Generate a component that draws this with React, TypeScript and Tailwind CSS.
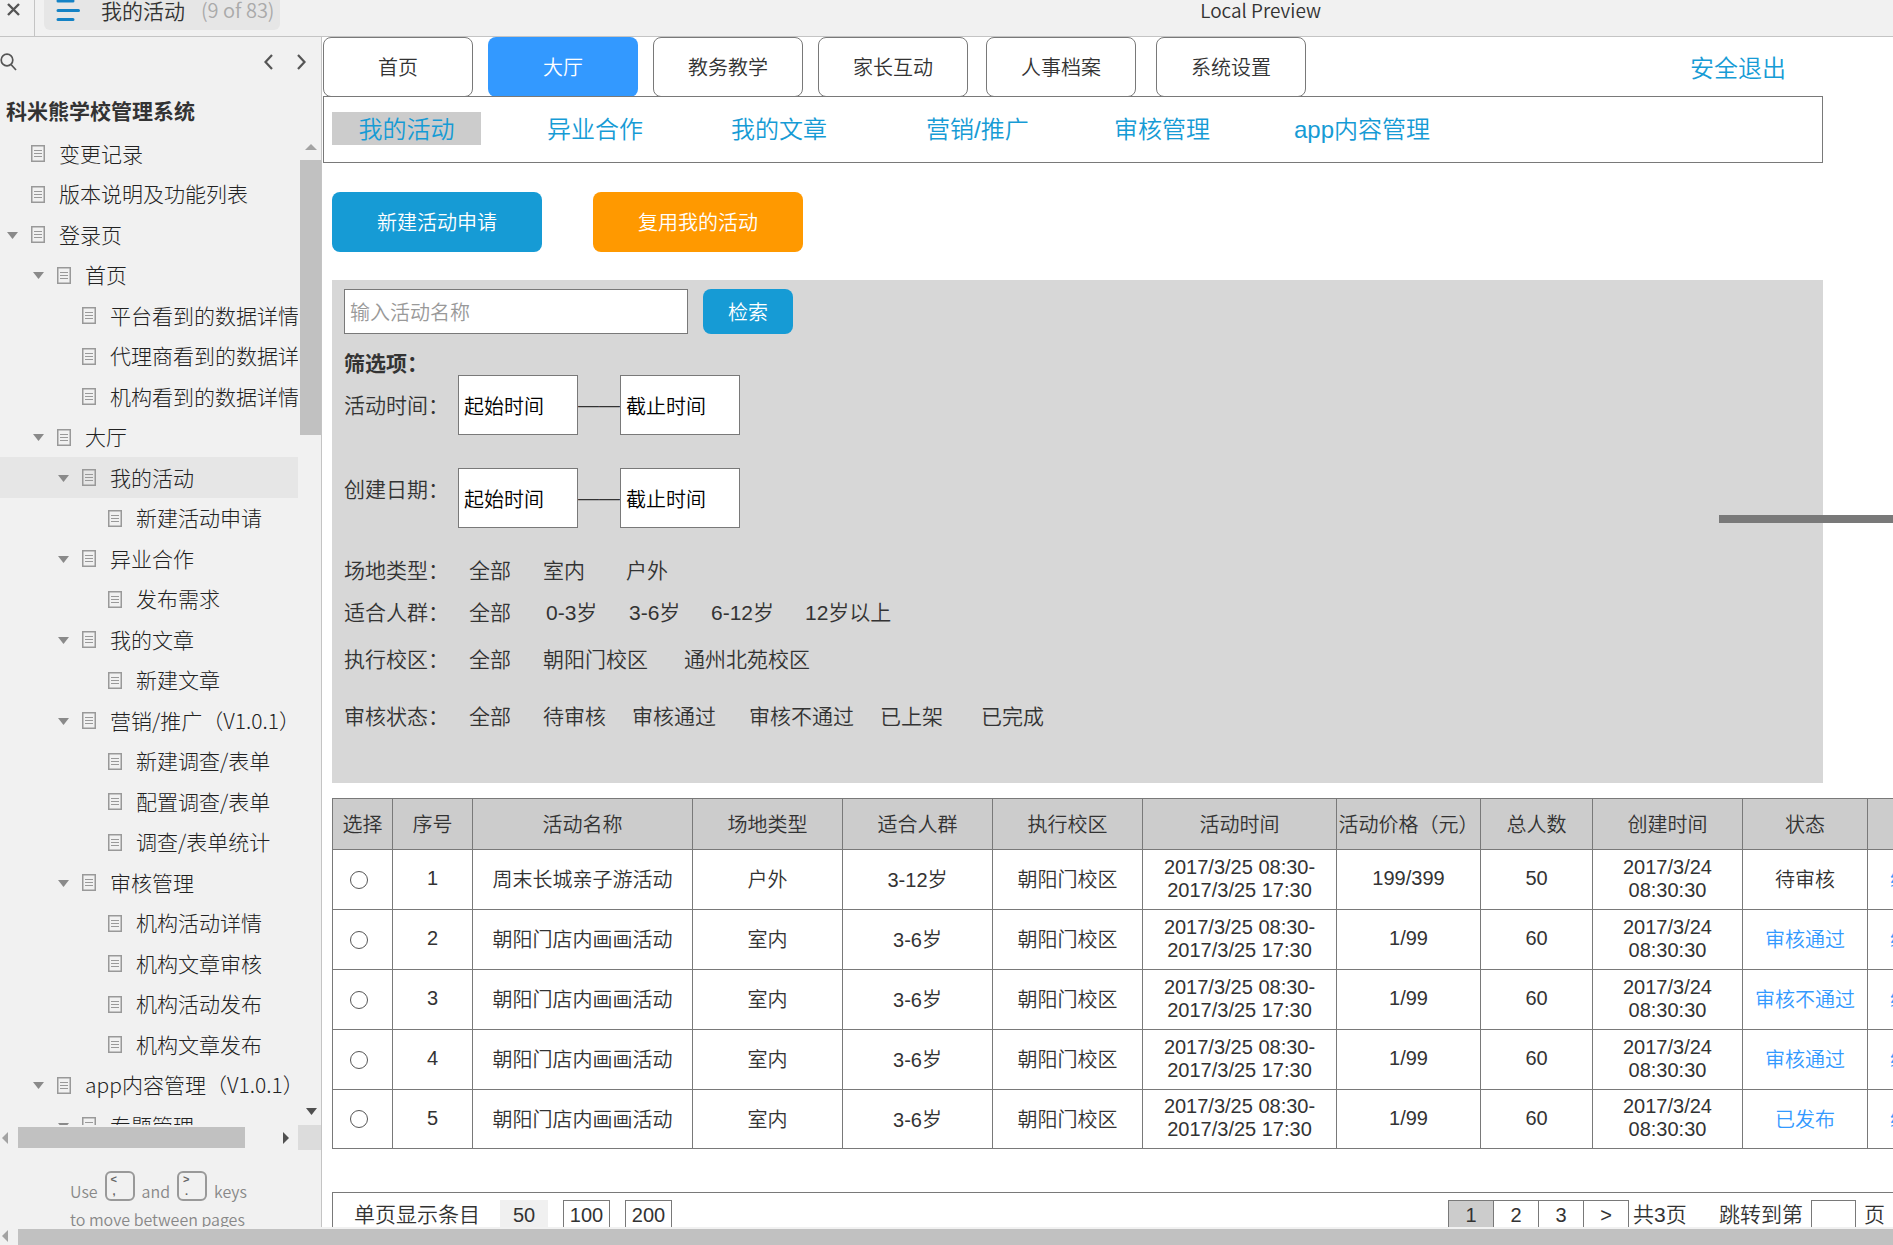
type Node = { label: string; level: 0 | 1 | 2 | 3; open?: boolean; active?: boolean }

const tree: Node[] = [
  { label: '变更记录', level: 0 },
  { label: '版本说明及功能列表', level: 0 },
  { label: '登录页', level: 0, open: true },
  { label: '首页', level: 1, open: true },
  { label: '平台看到的数据详情', level: 2 },
  { label: '代理商看到的数据详情', level: 2 },
  { label: '机构看到的数据详情', level: 2 },
  { label: '大厅', level: 1, open: true },
  { label: '我的活动', level: 2, open: true, active: true },
  { label: '新建活动申请', level: 3 },
  { label: '异业合作', level: 2, open: true },
  { label: '发布需求', level: 3 },
  { label: '我的文章', level: 2, open: true },
  { label: '新建文章', level: 3 },
  { label: '营销/推广（V1.0.1）', level: 2, open: true },
  { label: '新建调查/表单', level: 3 },
  { label: '配置调查/表单', level: 3 },
  { label: '调查/表单统计', level: 3 },
  { label: '审核管理', level: 2, open: true },
  { label: '机构活动详情', level: 3 },
  { label: '机构文章审核', level: 3 },
  { label: '机构活动发布', level: 3 },
  { label: '机构文章发布', level: 3 },
  { label: 'app内容管理（V1.0.1）', level: 1, open: true },
  { label: '专题管理', level: 2, open: true },
]

const indent = ['pl-1.5', 'pl-8', 'pl-[57px]', 'pl-[83px]']

const tabs = ['首页', '大厅', '教务教学', '家长互动', '人事档案', '系统设置']
const subTabs = ['我的活动', '异业合作', '我的文章', '营销/推广', '审核管理', 'app内容管理']

const options = [
  { label: '场地类型：', values: ['全部', '室内', '户外'], grid: 'h-[38px] grid-cols-[125px_74px_83px_auto]' },
  { label: '适合人群：', values: ['全部', '0-3岁', '3-6岁', '6-12岁', '12岁以上'], grid: 'h-[46px] grid-cols-[125px_77px_83px_82px_94px_auto]' },
  { label: '执行校区：', values: ['全部', '朝阳门校区', '通州北苑校区'], grid: 'h-[48px] grid-cols-[125px_74px_141px_auto]' },
  { label: '审核状态：', values: ['全部', '待审核', '审核通过', '审核不通过', '已上架', '已完成'], grid: 'h-[66px] grid-cols-[125px_74px_89px_117px_131px_101px_auto]' },
]

const columns = [
  { title: '选择', width: 'w-[60px]' },
  { title: '序号', width: 'w-[80px]' },
  { title: '活动名称', width: 'w-[220px]' },
  { title: '场地类型', width: 'w-[150px]' },
  { title: '适合人群', width: 'w-[150px]' },
  { title: '执行校区', width: 'w-[150px]' },
  { title: '活动时间', width: 'w-[194px]' },
  { title: '活动价格（元）', width: 'w-[144px]' },
  { title: '总人数', width: 'w-[112px]' },
  { title: '创建时间', width: 'w-[150px]' },
  { title: '状态', width: 'w-[125px]' },
  { title: '操作', width: 'w-[180px]' },
]

const rows = [
  { name: '周末长城亲子游活动', place: '户外', age: '3-12岁', price: '199/399', total: 50, status: '待审核' },
  { name: '朝阳门店内画画活动', place: '室内', age: '3-6岁', price: '1/99', total: 60, status: '审核通过' },
  { name: '朝阳门店内画画活动', place: '室内', age: '3-6岁', price: '1/99', total: 60, status: '审核不通过' },
  { name: '朝阳门店内画画活动', place: '室内', age: '3-6岁', price: '1/99', total: 60, status: '审核通过' },
  { name: '朝阳门店内画画活动', place: '室内', age: '3-6岁', price: '1/99', total: 60, status: '已发布' },
]

function PageIcon() {
  return (
    <svg width="14" height="17" viewBox="0 0 14 17" fill="none" stroke="#999" className="shrink-0" aria-hidden="true">
      <rect x="0.75" y="0.75" width="12.5" height="15.5" strokeWidth="1.5" />
      <path d="M3 5.5h8M3 8.5h8M3 11.5h8" strokeWidth="1.2" />
    </svg>
  )
}

function Arrow({ dir, color }: { dir: 'up' | 'down' | 'left' | 'right'; color: string }) {
  const d = { up: 'M0 9L6 3l6 6z', down: 'M1 3h11L6.500 10z', left: 'M8 0L2 6l6 6z', right: 'M3 0l6 6-6 6z' }[dir]
  return (
    <svg width="12" height="12" viewBox="0 0 12 12" fill={color} className="shrink-0" aria-hidden="true">
      <path d={d} />
    </svg>
  )
}

function Key({ top, bottom }: { top: string; bottom: string }) {
  return (
    <kbd className="flex h-[30px] w-[30px] flex-col justify-between rounded-md border-2 border-[#999] px-1 pt-px pb-0.5 font-['Liberation_Sans',sans-serif] text-[11px] leading-[11px] font-bold text-[#666]">
      <span>{top}</span>
      <span className="pl-0.5">{bottom}</span>
    </kbd>
  )
}

function Header() {
  return (
    <header className="flex h-[37px] shrink-0 items-start border-b border-[#c4c4c4] bg-[#f1f1f1] leading-[18px]">
      <button aria-label="Close" className="flex h-full w-[35px] items-start border-r border-[#c4c4c4] pt-[3px] pl-[7px]">
        <svg width="13" height="13" viewBox="0 0 13 13" stroke="#555" strokeWidth="2.4">
          <path d="M1 1l11 11M12 1L1 12" />
        </svg>
      </button>
      <button className="ml-[9px] flex h-[30px] w-[236px] items-start rounded-b-md bg-[#e6e6e6] pl-3">
        <svg width="24" height="22" viewBox="0 0 24 22" stroke="#1482c5" strokeWidth="3" strokeLinecap="round">
          <path d="M2 1h15M2 10.500h20.500M2 19.500h15" />
        </svg>
        <span className="ml-[21px] pt-px text-[21px] text-[#333]">我的活动</span>
        <span className="ml-4 pt-px text-[20px] text-[#aaa]">(9 of 83)</span>
      </button>
      <div className="flex-1 pt-px pr-[572px] text-right">
        <span className="text-[19px] text-[#333]">Local Preview</span>
      </div>
    </header>
  )
}

function Sidebar() {
  return (
    <aside className="flex w-[322px] shrink-0 flex-col overflow-hidden border-r border-[#c4c4c4] bg-[#f1f1f1]">
      <div className="flex h-[50px] shrink-0 items-center justify-between pr-[15px]">
        <button aria-label="Search">
          <svg width="17" height="18" viewBox="0 0 17 18" fill="none" stroke="#555" strokeWidth="1.700">
            <circle cx="7" cy="7" r="5.800" />
            <path d="M11 11.500l5 5.500" />
          </svg>
        </button>
        <div className="flex gap-6">
          <button aria-label="Previous page">
            <svg width="9" height="16" viewBox="0 0 9 16" fill="none" stroke="#555" strokeWidth="2.200">
              <path d="M8 1L1.500 8 8 15" />
            </svg>
          </button>
          <button aria-label="Next page">
            <svg width="9" height="16" viewBox="0 0 9 16" fill="none" stroke="#555" strokeWidth="2.200">
              <path d="M1 1l6.500 7L1 15" />
            </svg>
          </button>
        </div>
      </div>
      <h1 className="h-[46px] shrink-0 pl-1.5 text-[21px] leading-[46px] font-bold text-[#333]">科米熊学校管理系统</h1>
      <div className="flex min-h-0 flex-1">
        <ul className="mr-0.5 min-w-0 flex-1 overflow-hidden font-light">
          {tree.map((n) => (
            <li key={n.label} className={`odd:h-[41px] even:h-10 ${n.active ? 'bg-[#e6e6e6]' : ''}`}>
              <a href="#" className={`flex h-full items-center whitespace-nowrap ${indent[n.level]}`}>
                <span className="w-[25px] shrink-0">{n.open && <Arrow dir="down" color="#8a8a8a" />}</span>
                <PageIcon />
                <span className="ml-3.5 text-[21px] text-[#222]">{n.label}</span>
              </a>
            </li>
          ))}
        </ul>
        <div className="flex w-[21px] shrink-0 flex-col items-center">
          <div className="flex h-[27px] items-center">
            <Arrow dir="up" color="#a3a3a3" />
          </div>
          <div className="h-[275px] w-full bg-[#c1c1c1]" />
          <div className="flex flex-1 items-end pb-2">
            <Arrow dir="down" color="#505050" />
          </div>
        </div>
      </div>
      <div className="flex h-[25px] shrink-0 items-center">
        <Arrow dir="left" color="#a3a3a3" />
        <div className="ml-1.5 h-[21px] w-[227px] bg-[#c1c1c1]" />
        <div className="flex flex-1 justify-end pr-1.5">
          <Arrow dir="right" color="#505050" />
        </div>
        <div className="h-full w-[23px] bg-[#dcdcdc]" />
      </div>
      <div className="flex h-[77px] shrink-0 flex-col overflow-hidden pt-[21px] pl-[70px] text-[16px] leading-7 text-[#888]">
        <div className="flex shrink-0 gap-[7px]">
          <span className="pt-1.5">Use</span>
          <Key top="<" bottom="," />
          <span className="pt-1.5">and</span>
          <Key top=">" bottom="." />
          <span className="pt-1.5">keys</span>
        </div>
        <p className="shrink-0 whitespace-nowrap">to move between pages</p>
      </div>
    </aside>
  )
}

function DateRange({ label, id, labelPad }: { label: string; id: string; labelPad: string }) {
  const box = 'h-[60px] w-[120px] border border-[#797979] bg-white pl-[5px] text-[20px] text-black'
  return (
    <div className="flex h-[60px]">
      <label htmlFor={id} className={`w-[114px] leading-[30px] ${labelPad}`}>{label}</label>
      <input id={id} className={box} defaultValue="起始时间" />
      <span className="w-[42px] overflow-hidden leading-[60px]">——</span>
      <input aria-label={`${label}截止`} className={box} defaultValue="截止时间" />
    </div>
  )
}

function Filters() {
  return (
    <section className="relative mt-7 mr-[70px] ml-[9px] h-[503px] shrink-0 bg-[#d7d7d7] pt-[9px] pl-3 text-[21px] text-[#333]">
      <form className="flex gap-[15px]">
        <input
          aria-label="活动名称"
          placeholder="输入活动名称"
          className="h-[45px] w-[344px] border border-[#797979] bg-white pt-1 pl-[5px] text-[20px] placeholder:text-[#999]"
        />
        <button type="button" className="h-[45px] w-[90px] rounded-lg bg-[#169bd5] pt-0.5 text-[20px] text-white">检索</button>
      </form>
      <h2 className="mt-[15px] h-[26px] leading-[30px] font-bold">筛选项：</h2>
      <div className="flex flex-col gap-[33px]">
        <DateRange label="活动时间：" id="active-time" labelPad="pt-4" />
        <DateRange label="创建日期：" id="create-date" labelPad="pt-[7px]" />
      </div>
      <div className="mt-6">
        {options.map((o) => (
          <div key={o.label} className={`grid items-center ${o.grid}`}>
            <span>{o.label}</span>
            {o.values.map((v) => (
              <button key={v} type="button" className="text-left whitespace-nowrap">{v}</button>
            ))}
          </div>
        ))}
      </div>
      <div className="absolute top-[235px] -right-[80px] h-2 w-[184px] bg-[#797979]" />
    </section>
  )
}

function Activities() {
  return (
    <table className="mt-[15px] ml-[9px] w-[1716px] shrink-0 table-fixed border-collapse text-center text-[20px] leading-[23px] text-[#333]">
      <thead>
        <tr className="h-[51px] bg-[#ccc]">
          {columns.map((c) => (
            <th key={c.title} className={`border border-[#797979] pt-0.5 font-[350] whitespace-nowrap ${c.width}`}>{c.title}</th>
          ))}
        </tr>
      </thead>
      <tbody className="[&_td]:border [&_td]:border-[#797979]">
        {rows.map((r, i) => (
          <tr key={i} className="h-[60px] last:h-[59px]">
            <td className="pr-2">
              <input
                type="radio"
                name="activity"
                aria-label={`选择 ${i + 1}`}
                className="mx-auto block h-[18px] w-[18px] appearance-none rounded-full border border-[#555] bg-white"
              />
            </td>
            <td className="pb-0.5">{i + 1}</td>
            <td className="pt-0.5">{r.name}</td>
            <td className="pt-0.5">{r.place}</td>
            <td className="pt-0.5">{r.age}</td>
            <td className="pt-0.5">朝阳门校区</td>
            <td className="pb-0.5">2017/3/25 08:30-<br />2017/3/25 17:30</td>
            <td className="pb-0.5">{r.price}</td>
            <td className="pb-0.5">{r.total}</td>
            <td className="pb-0.5">2017/3/24<br />08:30:30</td>
            <td className="pt-0.5">{i === 0 ? r.status : <a href="#" className="text-[#3399ff]">{r.status}</a>}</td>
            <td className="pt-0.5 pl-[22px] text-left"><a href="#" className="text-[#3399ff]">编辑</a></td>
          </tr>
        ))}
      </tbody>
    </table>
  )
}

function Pager() {
  return (
    <div className="mt-[43px] ml-[9px] flex h-[60px] shrink-0 items-start border-t border-l border-[#797979] pt-[7px] pl-[21px] text-[21px] leading-[30px] text-[#333]">
      <span>单页显示条目</span>
      <div className="ml-5 flex gap-[15px] text-[20px]">
        <button className="w-12 bg-[#f0f0f0]">50</button>
        <button className="w-[47px] border border-[#797979] leading-7">100</button>
        <button className="w-[47px] border border-[#797979] leading-7">200</button>
      </div>
      <div className="ml-auto flex border-l border-[#797979] text-[20px]">
        {['1', '2', '3', '>'].map((p) => (
          <button key={p} className={`w-[45px] border-y border-r border-[#797979] leading-7 ${p === '1' ? 'bg-[#ccc]' : ''}`}>{p}</button>
        ))}
      </div>
      <span className="ml-1 w-[86px]">共3页</span>
      <label htmlFor="goto">跳转到第</label>
      <input id="goto" className="mx-2 h-[30px] w-[45px] border border-[#797979]" />
      <span className="mr-2">页</span>
    </div>
  )
}

export default function App() {
  return (
    <div className="flex h-screen flex-col overflow-hidden bg-white font-['Noto_Sans_CJK_SC',sans-serif] font-[350]">
      <Header />
      <div className="flex min-h-0 flex-1">
        <Sidebar />
        <main className="flex min-w-0 flex-1 flex-col overflow-hidden pl-px font-['Liberation_Sans','Noto_Sans_CJK_SC',sans-serif]">
          <nav className="flex shrink-0 items-center justify-between pr-[107px] text-[20px] text-[#333]">
            <div className="grid grid-cols-[165px_165px_165px_168px_170px_150px]">
              {tabs.map((t) => (
                <button
                  key={t}
                  className={`h-[60px] w-[150px] rounded-lg pt-0.5 ${t === '大厅' ? 'bg-[#3399ff] text-white' : 'border border-[#797979]'}`}
                >
                  {t}
                </button>
              ))}
            </div>
            <a href="#" className="pt-1 text-[24px] text-[#169bd5]">安全退出</a>
          </nav>
          <nav className="-mt-px mr-[70px] grid h-[67px] shrink-0 grid-cols-[215px_184px_195px_188px_180px_auto] items-start border border-[#797979] pt-[15px] pl-2 text-[24px] leading-[35px] text-[#169bd5]">
            {subTabs.map((t, i) => (
              <a key={t} href="#" className={i === 0 ? 'h-[33px] w-[149px] bg-[#ccc] text-center' : ''}>
                {t}
              </a>
            ))}
          </nav>
          <div className="mt-[29px] ml-[9px] flex shrink-0 gap-[51px] text-[20px] text-white">
            <button className="h-[60px] w-[210px] rounded-lg bg-[#169bd5] pt-0.5">新建活动申请</button>
            <button className="h-[60px] w-[210px] rounded-lg bg-[#ff9900] pt-0.5">复用我的活动</button>
          </div>
          <Filters />
          <Activities />
          <Pager />
        </main>
      </div>
      <div className="flex h-[18px] shrink-0 items-center bg-[#f1f1f1]">
        <Arrow dir="left" color="#a3a3a3" />
        <div className="mt-0.5 ml-1.5 h-4 flex-1 bg-[#c1c1c1]" />
      </div>
    </div>
  )
}
